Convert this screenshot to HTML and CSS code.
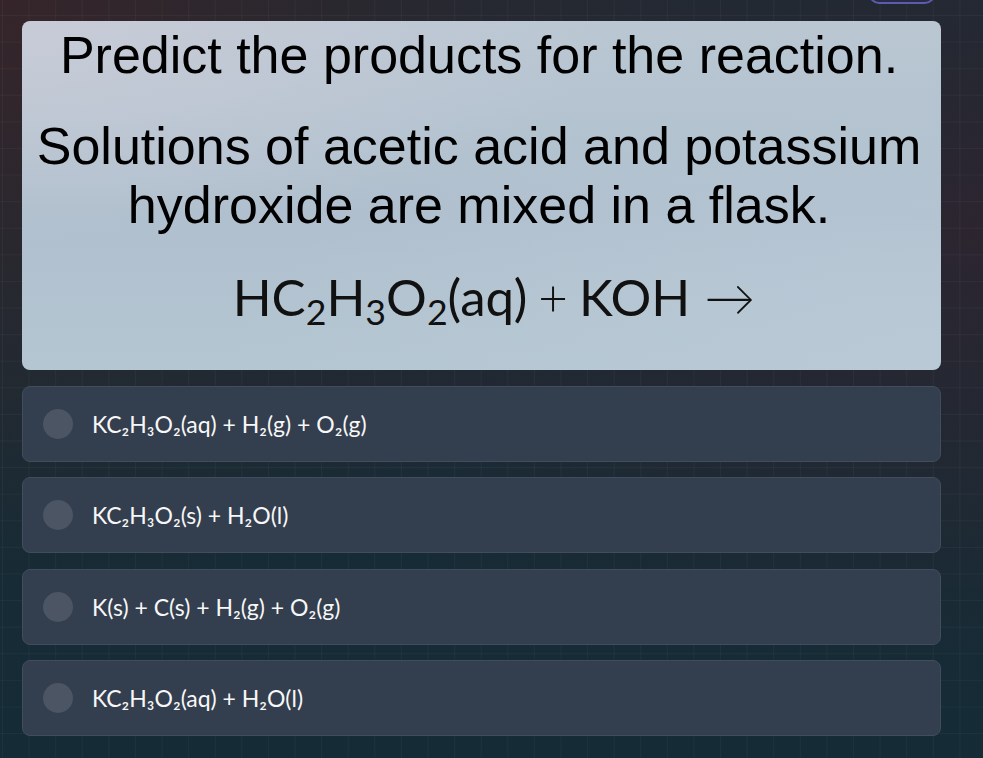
FILE: index.html
```html
<!DOCTYPE html>
<html lang="en">
<head>
    <meta charset="UTF-8">
    <meta name="viewport" content="width=device-width, initial-scale=1.0">
    <title>Predict the products</title>
    <link rel="stylesheet" href="styles.css">
</head>
<body>
    <div class="top-btn"></div>

    <div class="quiz">
        <div class="question-card">
            <p class="q-line">Predict the products for the reaction.</p>
            <p class="q-line q-gap">Solutions of acetic acid and potassium hydroxide are mixed in a flask.</p>
            <p class="equation">HC<sub>2</sub>H<sub>3</sub>O<sub>2</sub>(aq)<span class="op">+</span>KOH<span class="arrow">→</span></p>
        </div>

        <div class="option">
            <span class="radio"></span>
            <span class="option-text">KC₂H₃O₂(aq) + H₂(g) + O₂(g)</span>
        </div>
        <div class="option">
            <span class="radio"></span>
            <span class="option-text">KC₂H₃O₂(s) + H₂O(l)</span>
        </div>
        <div class="option">
            <span class="radio"></span>
            <span class="option-text">K(s) + C(s) + H₂(g) + O₂(g)</span>
        </div>
        <div class="option">
            <span class="radio"></span>
            <span class="option-text">KC₂H₃O₂(aq) + H₂O(l)</span>
        </div>
    </div>
</body>
</html>
```

FILE: styles.css
```css
html, body {
    height: 100%;
}

body {
    margin: 0;
    font-family: 'Lato', 'Liberation Sans', sans-serif;
    color: #fff;
    background-color: #1c2a33;
    background-image:
        linear-gradient(rgba(255, 255, 255, 0.035) 1px, transparent 1px),
        linear-gradient(90deg, rgba(255, 255, 255, 0.035) 1px, transparent 1px),
        radial-gradient(ellipse at 100% 30%, #2c2530 0%, rgba(44, 37, 48, 0) 60%),
        radial-gradient(ellipse at 0% 0%, #35252a 0%, rgba(53, 37, 42, 0) 55%),
        linear-gradient(180deg, #1b2c35 0%, #152b36 100%);
    background-size: 26.6px 26.6px, 26.6px 26.6px, 100% 100%, 100% 100%, 100% 100%;
    background-position: 0 15px, 2px 0, 0 0, 0 0, 0 0;
    overflow: hidden;
    position: relative;
}

.top-btn {
    position: absolute;
    top: -30px;
    left: 869px;
    width: 62px;
    height: 30px;
    border: 2px solid #5b5cae;
    border-radius: 10px;
    background: #2b2a44;
}

.quiz {
    width: 919px;
    margin-left: 22px;
    padding-top: 21px;
}

.question-card {
    background:
        radial-gradient(ellipse at 0% 0%, #c7cbd7 0%, rgba(199, 203, 215, 0) 45%),
        radial-gradient(ellipse at 100% 100%, #b9c9d6 0%, rgba(185, 201, 214, 0) 55%),
        linear-gradient(180deg, #bac7d3 0%, #afbfcd 55%, #b5c6d3 100%);
    border-radius: 8px;
    padding: 5px 14px 0 9px;
    height: 344px;
    color: #000;
    text-align: center;
}

.q-line {
    margin: 0;
    font-family: 'Liberation Sans', Arial, sans-serif;
    font-size: 52px;
    line-height: 59px;
}

.q-gap {
    margin-top: 32px;
}

.equation {
    margin: 32px 0 0;
    padding-left: 30px;
    font-family: 'Lato', sans-serif;
    font-size: 51px;
    line-height: 60px;
    color: #111;
}

.equation sub {
    font-size: 0.7em;
    vertical-align: -0.25em;
    line-height: 0;
}

.equation .op {
    font-weight: 300;
    padding: 0 11px;
}

.equation .arrow {
    font-weight: 300;
    padding-left: 14px;
}

.option {
    display: flex;
    align-items: center;
    gap: 19px;
    height: 74px;
    margin-top: 15.5px;
    padding-left: 20px;
    background: #333e4e;
    border: 1px solid #414c5c;
    border-radius: 8px;
}

.radio {
    width: 30px;
    height: 30px;
    border-radius: 50%;
    background: #4b5563;
    flex-shrink: 0;
}

.option-text {
    font-size: 23px;
    color: #f7f7f7;
}
```
